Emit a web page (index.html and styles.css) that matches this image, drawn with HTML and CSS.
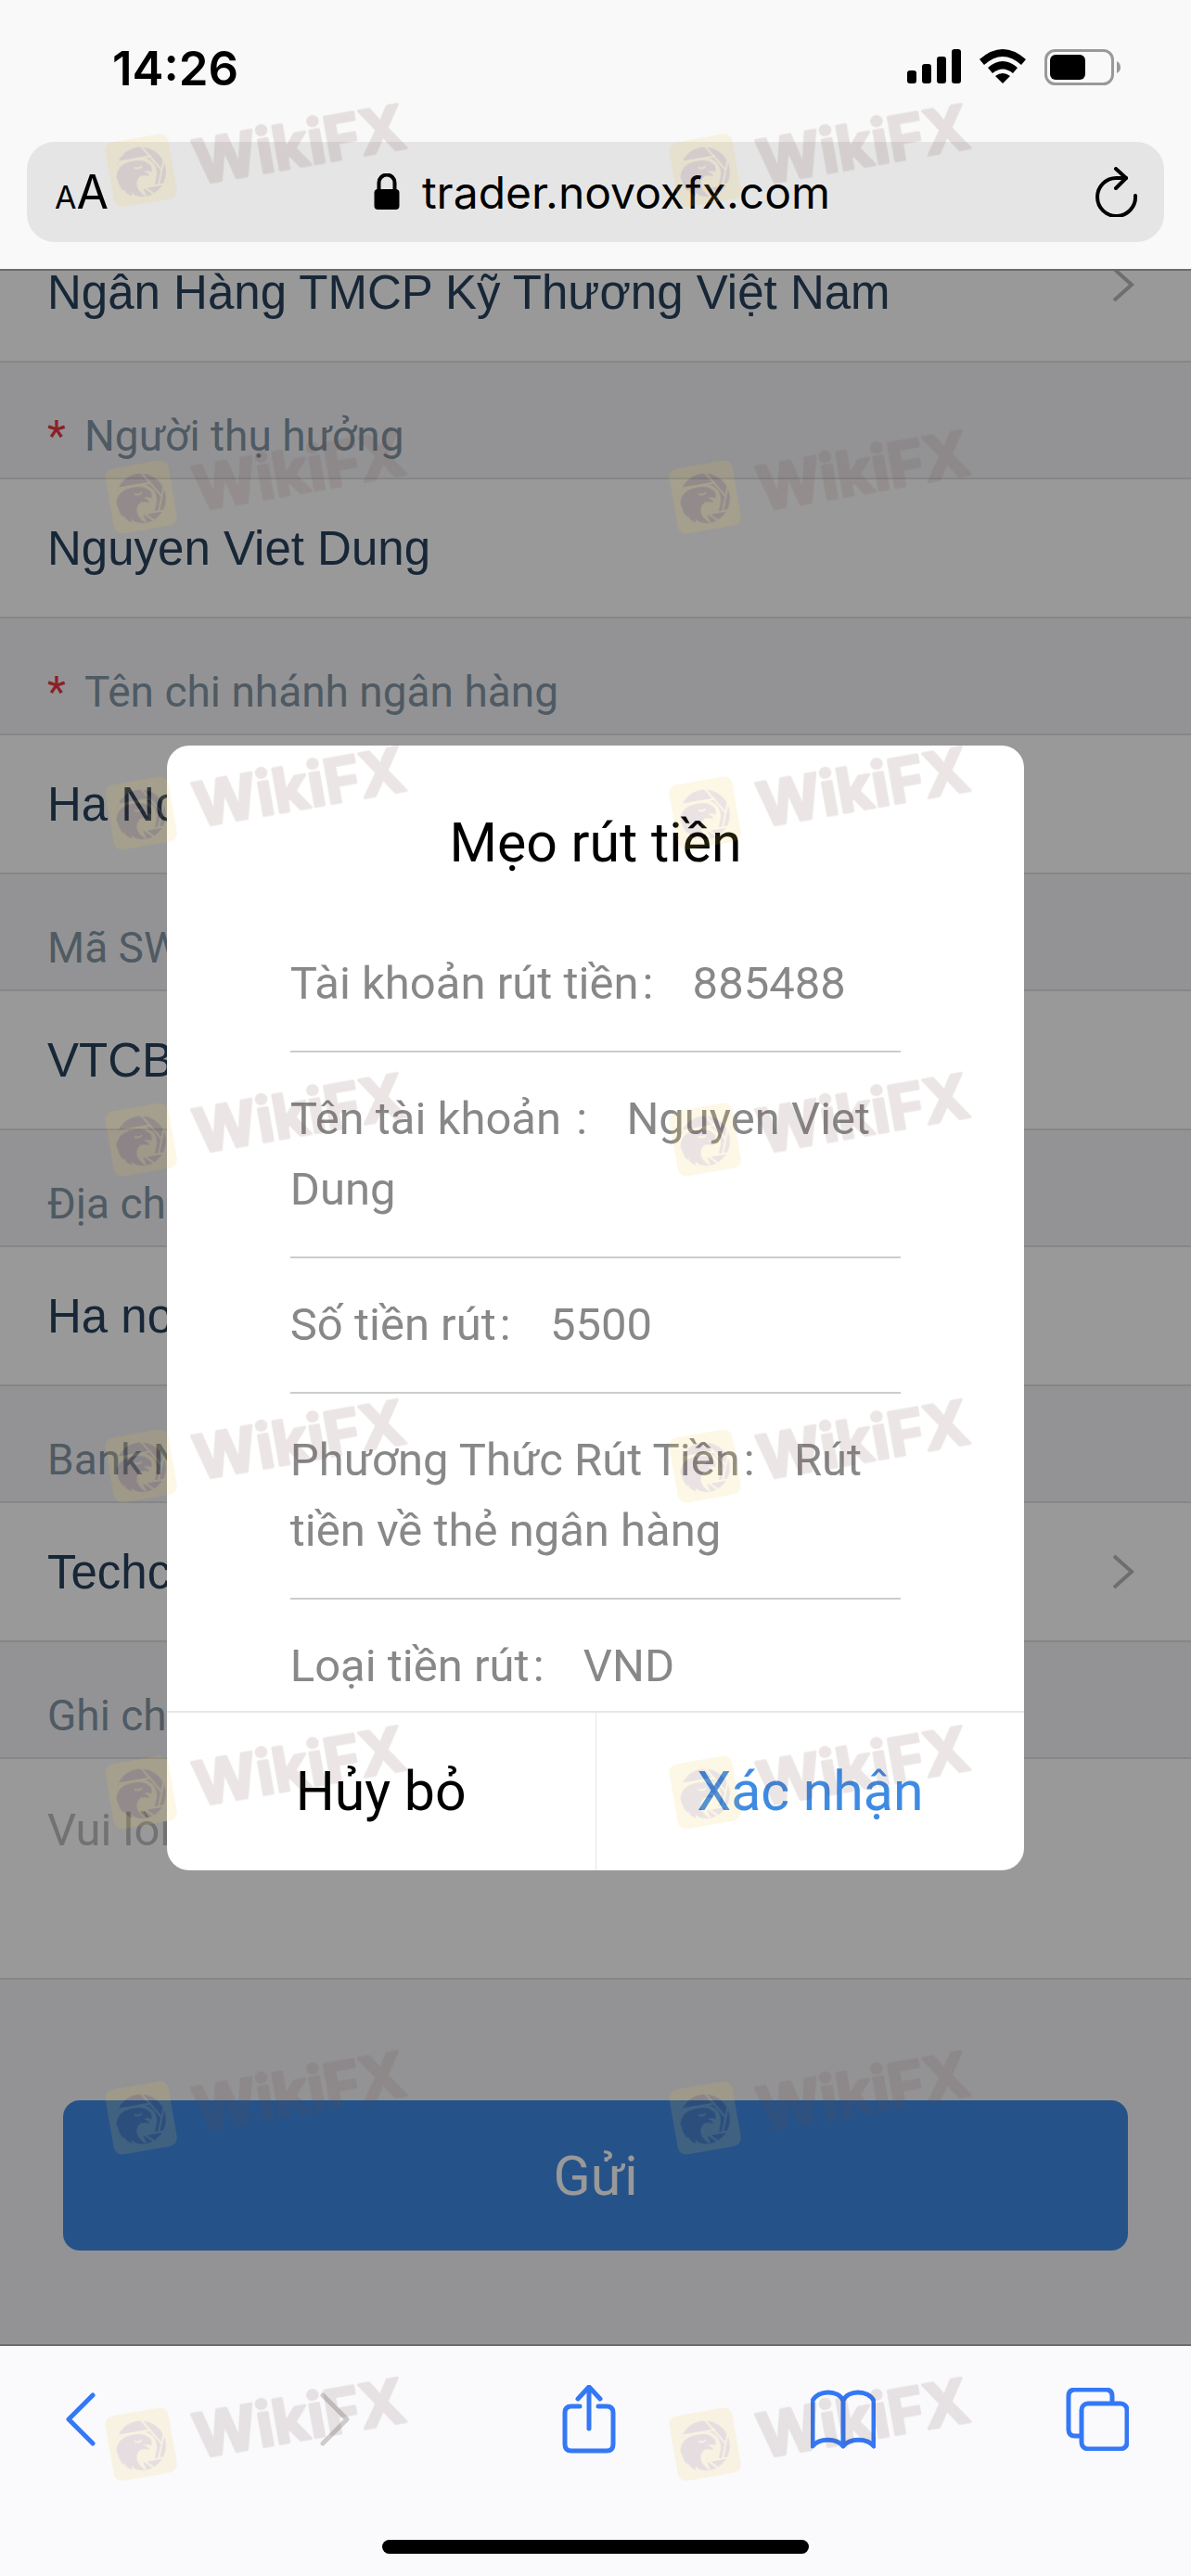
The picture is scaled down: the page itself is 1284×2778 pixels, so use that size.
FILE: index.html
```html
<!DOCTYPE html>
<html lang="vi">
<head>
  <meta charset="UTF-8" />
  <meta name="viewport" content="width=device-width, initial-scale=1.0" />
  <title>trader.novoxfx.com</title>
  <link rel="stylesheet" href="styles.css">
</head>
<body>
  <header class="browser-top">
    <div class="status">
      <span class="clock">14:26</span>
      <div class="status-icons">
        <svg width="58" height="38" viewBox="0 0 58 38">
          <rect x="0" y="23" width="10" height="14" rx="3"/>
          <rect x="16" y="16" width="10" height="21" rx="3"/>
          <rect x="32" y="8" width="10" height="29" rx="3"/>
          <rect x="48" y="0" width="10" height="37" rx="3"/>
        </svg>
        <svg width="52" height="38" viewBox="0 0 52 38">
          <path d="M1 11 Q26 -11 51 11 L46 17 Q26 -1 6 17Z"/>
          <path d="M10 20 Q26 6 42 20 L37 26 Q26 17 15 26Z"/>
          <path d="M18 29 Q26 23 34 29 L26 37Z"/>
        </svg>
        <svg width="82" height="40" viewBox="0 0 82 40">
          <rect x="1.500" y="1.500" width="72" height="36" rx="10" fill="none" stroke="#999" stroke-width="3"/>
          <rect x="6" y="6" width="38" height="27" rx="6"/>
          <path d="M78 13 Q82 15 82 19.500 Q82 24 78 26Z" fill="#999"/>
        </svg>
      </div>
    </div>
    <div class="address">
      <button class="text-size" aria-label="Cỡ chữ"><small>A</small>A</button>
      <a class="site" href="#">
        <svg width="28" height="40" viewBox="0 0 28 40">
          <path d="M5.500 18 V10 a8.500 8.500 0 0 1 17 0 V18" fill="none" stroke="#000" stroke-width="4"/>
          <rect x="0.500" y="17" width="27" height="22" rx="4"/>
        </svg>
        <span>trader.novoxfx.com</span>
      </a>
      <button aria-label="Tải lại">
        <svg width="46" height="54" viewBox="0 0 46 54" fill="none" stroke="#000" stroke-width="4" stroke-linecap="round" stroke-linejoin="round">
          <path d="M43 31 A20.500 20.500 0 1 1 23 12 H33"/>
          <path d="M22 2 L33 12 L22 23"/>
        </svg>
      </button>
    </div>
  </header>

  <main>
    <form class="withdraw">
      <div class="field">
        <input type="text" aria-label="Ngân hàng" value="Ngân Hàng TMCP Kỹ Thương Việt Nam">
        <svg class="arrow arrow-top" width="26" height="40" viewBox="0 0 26 40"><path d="M3 3 L22 20 L3 37"/></svg>
      </div>

      <label for="holder"><b>*</b>Người thụ hưởng</label>
      <div class="field"><input type="text" id="holder" value="Nguyen Viet Dung"></div>

      <label for="branch"><b>*</b>Tên chi nhánh ngân hàng</label>
      <div class="field"><input type="text" id="branch" value="Ha Noi"></div>

      <label for="swift">Mã SWIFT</label>
      <div class="field"><input type="text" id="swift" value="VTCBVNVX"></div>

      <label for="address">Địa chỉ</label>
      <div class="field"><input type="text" id="address" value="Ha noi"></div>

      <label for="bank">Bank Name</label>
      <div class="field">
        <input type="text" id="bank" value="Techcombank">
        <svg class="arrow" width="26" height="40" viewBox="0 0 26 40"><path d="M3 3 L22 20 L3 37"/></svg>
      </div>

      <label for="note">Ghi chú</label>
      <textarea id="note" placeholder="Vui lòng nhập"></textarea>

      <button class="submit" type="submit">Gửi</button>
    </form>

    <div class="overlay">
      <section class="dialog" role="dialog" aria-labelledby="dialogTitle">
        <h2 id="dialogTitle">Mẹo rút tiền</h2>
        <ul>
          <li>Tài khoản rút tiền<i>:</i> 885488</li>
          <li>Tên tài khoản <i>:</i> Nguyen Viet Dung</li>
          <li>Số tiền rút<i>:</i> 5500</li>
          <li>Phương Thức Rút Tiền<i>:</i> Rút tiền về thẻ ngân hàng</li>
          <li>Loại tiền rút<i>:</i> VND</li>
        </ul>
        <div class="dialog-buttons">
          <button>Hủy bỏ</button>
          <button class="confirm">Xác nhận</button>
        </div>
      </section>
    </div>
  </main>

  <footer class="browser-bottom">
    <nav>
      <button aria-label="Quay lại">
        <svg width="32" height="58" viewBox="0 0 32 58"><path d="M29 3 L3 29 L29 55"/></svg>
      </button>
      <button class="off" aria-label="Tiếp">
        <svg width="32" height="58" viewBox="0 0 32 58"><path d="M3 3 L29 29 L3 55"/></svg>
      </button>
      <button aria-label="Chia sẻ">
        <svg width="58" height="74" viewBox="0 0 58 74">
          <path d="M19 23 H10 Q3 23 3 30 V64 Q3 71 10 71 H48 Q55 71 55 64 V30 Q55 23 48 23 H39"/>
          <path d="M29 47 V3 M17 15 L29 2 L41 15"/>
        </svg>
      </button>
      <button aria-label="Dấu trang">
        <svg width="70" height="64" viewBox="0 0 70 64">
          <path d="M35 61 V12 C30 0 8 0 2 12 V61 C9 52 28 52 35 61 C42 52 61 52 68 61 V12 C62 0 40 0 35 12"/>
        </svg>
      </button>
      <button aria-label="Thẻ">
        <svg width="68" height="68" viewBox="0 0 68 68">
          <path d="M16 52 H10 Q3 52 3 45 V9 Q3 2 10 2 H43 Q50 2 50 9 V16"/>
          <rect x="17" y="17" width="49" height="49" rx="7"/>
        </svg>
      </button>
    </nav>
    <div class="home-bar"></div>
  </footer>

  <svg class="watermark" viewBox="0 0 1284 2778" aria-hidden="true">
    <defs>
      <g id="mark" transform="rotate(-10)">
        <rect width="69" height="71" rx="9" fill="#f1c64d"/>
        <circle cx="34" cy="37" r="27" fill="#623737"/>
        <path d="M6 22 H48 M38 8 L56 38 M62 25 L50 55 M58 54 H32 M46 65 L33 52" fill="none" stroke="#f1c64d" stroke-width="2"/>
        <!-- eagle head -->
        <path d="M5 28 L14 22 H40 Q54 30 50 44 L46 54 H33 L36 65 Q18 66 8 52 Z" fill="#f1c64d"/>
        <path d="M7 38 Q10 25 24 24 Q40 22 46 32 Q47 36 45 39 Q42 36 37 37 Q43 40 42 43 Q38 41 33 41 Q25 46 28 55 Q30 60 35 64 Q24 63 20 57 L20 61 Q14 58 13 52 L12 54 Q8 48 8 42 Z" fill="#623737"/>
        <path d="M28 31 Q32 34 36 31" fill="none" stroke="#f1c64d" stroke-width="2"/>
        <text x="92" y="61">WikiFX</text>
      </g>
      <g id="pair">
        <use href="#mark" x="0" y="0"/>
        <use href="#mark" x="608" y="0"/>
      </g>
    </defs>
    <use href="#pair" x="112" y="155"/>
    <use href="#pair" x="112" y="507"/>
    <use href="#pair" x="112" y="848"/>
    <use href="#pair" x="112" y="1200"/>
    <use href="#pair" x="112" y="1552"/>
    <use href="#pair" x="112" y="1904"/>
    <use href="#pair" x="112" y="2255"/>
    <use href="#pair" x="112" y="2607"/>
  </svg>
</body>
</html>
```
FILE: styles.css
```css
* {
  box-sizing: border-box;
}
body {
  margin: 0;
  min-height: 100vh;
  display: flex;
  flex-direction: column;
  position: relative;
  font-family: Inter, "Liberation Sans", sans-serif;
  color: #000;
}
button {
  padding: 0;
  border: none;
  background: none;
  font-family: inherit;
  color: inherit;
  cursor: pointer;
}
svg {
  display: block;
}

/* browser top */
.browser-top {
  height: 292px;
  background: #f9f9f9;
  border-bottom: 2px solid #6c6c6e;
}
.status {
  display: flex;
  justify-content: space-between;
  height: 153px;
  padding: 44px 76px 0 121px;
}
.clock {
  font-size: 51px;
  line-height: 60px;
  font-weight: 600;
}
.status-icons {
  display: flex;
  gap: 19px;
  padding-top: 9px;
}
.address {
  display: flex;
  align-items: center;
  justify-content: space-between;
  height: 108px;
  margin: 0 29px;
  padding: 0 28px 0 30px;
  border-radius: 30px;
  background: #e5e5e5;
}
.text-size {
  font-size: 50px;
}
.text-size small {
  font-size: 34px;
}
.site {
  display: flex;
  align-items: center;
  gap: 24px;
  font-size: 48px;
  color: #000;
  text-decoration: none;
}

/* form */
main {
  flex: 1;
  position: relative;
  overflow: hidden;
  background: #f6f6f9;
  font-family: Roboto, "Liberation Sans", sans-serif;
}
.withdraw {
  margin-top: -53px;
  display: flex;
  flex-direction: column;
}
.withdraw label {
  height: 124px;
  padding: 44px 51px 0;
  font-size: 46px;
  line-height: 70px;
  color: #8497a6;
}
.withdraw label b {
  display: inline-block;
  width: 40px;
  font-weight: 400;
  color: #e8383d;
}
.field {
  display: flex;
  align-items: center;
  height: 152px;
  padding: 0 60px 0 51px;
  background: #fff;
  border-top: 2px solid #e0e0e2;
  border-bottom: 2px solid #e0e0e2;
}
.field input {
  flex: 1;
  min-width: 0;
  padding: 0;
  border: none;
  background: none;
  font: 51px "Liberation Sans", sans-serif;
  color: #28415d;
}
.arrow {
  fill: none;
  stroke: #b8b8b8;
  stroke-width: 4;
}
.arrow-top {
  margin-bottom: 16px;
}
textarea {
  height: 240px;
  padding: 42px 51px;
  border: solid #e0e0e2;
  border-width: 2px 0;
  background: #fff;
  resize: none;
  font: 49px/70px Roboto, sans-serif;
}
textarea::placeholder {
  color: #bfbfbf;
}
.withdraw .submit {
  height: 162px;
  margin: 130px 68px 0;
  border-radius: 18px;
  background: #3e8be4;
  color: #fff;
  font-size: 59px;
}

/* dialog */
.overlay {
  position: absolute;
  inset: 0;
  display: flex;
  align-items: center;
  justify-content: center;
  background: rgba(0, 0, 0, 0.4);
}
.dialog {
  width: 72%;
  border-radius: 24px;
  background: #fff;
  overflow: hidden;
}
.dialog h2 {
  margin: 0;
  padding: 65px 0 40px;
  font-size: 59px;
  line-height: 80px;
  font-weight: 400;
  text-align: center;
}
.dialog ul {
  margin: 0 133px;
  padding: 0;
  height: 856px;
  overflow: hidden;
  list-style: none;
  font-size: 49px;
  line-height: 76px;
  color: #888;
}
.dialog li {
  padding: 34px 0;
  border-bottom: 2px solid #ccc;
}
.dialog i {
  display: inline-block;
  width: 46px;
  padding-left: 4px;
  font-style: normal;
}
.dialog-buttons {
  display: flex;
  border-top: 2px solid #e6e6e6;
}
.dialog-buttons button {
  flex: 1;
  height: 170px;
  font-size: 59px;
}
.dialog-buttons .confirm {
  border-left: 1px solid #e6e6e6;
  color: #3e8be4;
}

/* browser bottom */
.browser-bottom {
  height: 250px;
  background: #fafafc;
  border-top: 2px solid #6c6c6e;
}
.browser-bottom nav {
  display: flex;
  align-items: center;
  justify-content: space-between;
  padding: 42px 66px 0 52px;
}
.browser-bottom nav button {
  display: flex;
  justify-content: center;
  width: 70px;
}
.browser-bottom nav svg {
  fill: none;
  stroke: #3478f6;
  stroke-width: 5;
  stroke-linecap: round;
  stroke-linejoin: round;
}
.browser-bottom .off svg {
  stroke: #ccc;
}
.home-bar {
  width: 460px;
  height: 15px;
  margin: 93px auto 0;
  border-radius: 8px;
  background: #000;
}

/* watermark over everything */
.watermark {
  position: absolute;
  inset: 0;
  width: 100%;
  pointer-events: none;
}
.watermark > use {
  opacity: 0.14;
}
.watermark text {
  font: 700 66px Inter, sans-serif;
  fill: #6e4a40;
  stroke: #6e4a40;
  stroke-width: 3;
  stroke-linejoin: round;
}
```
